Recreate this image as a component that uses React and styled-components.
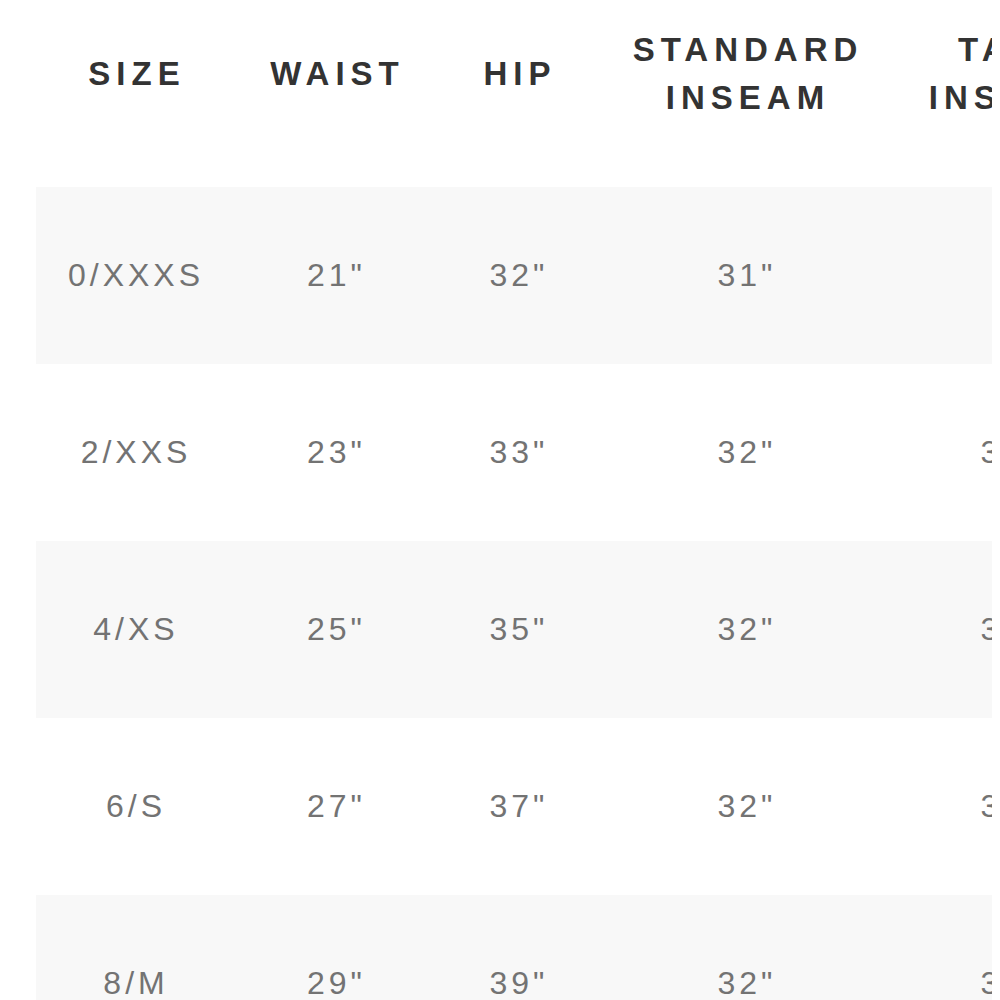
import React from 'react'
import styled, { createGlobalStyle } from 'styled-components'

const GlobalStyle = createGlobalStyle`
  body {
    margin: 0;
    background: #ffffff;
    font-family: "Liberation Sans", Arial, sans-serif;
  }
`

const Page = styled.div`
  width: 1000px;
  height: 1000px;
  overflow: hidden;
  padding-left: 36px;
  box-sizing: border-box;
`
const Frame = styled.div`
  width: 956px;
  overflow: hidden;
`
const Grid = styled.div`
  display: grid;
  grid-template-columns: 196px 205px 160px 296px 230px;
  width: 1087px;
`
const HeadCell = styled.div`
  height: 148px;
  margin-bottom: 39px;
  display: flex;
  align-items: center;
  justify-content: center;
  text-align: center;
  padding-left: 6px;
  box-sizing: border-box;
  color: #333333;
  font-size: 33px;
  font-weight: bold;
  letter-spacing: 6px;
  line-height: 48px;
`
const Cell = styled.div`
  height: 177px;
  display: flex;
  align-items: center;
  justify-content: center;
  padding-left: 4px;
  box-sizing: border-box;
  background: ${props => (props.striped ? '#f8f8f8' : '#ffffff')};
  color: #737373;
  font-size: 32px;
  letter-spacing: 4px;
`

const headers = [['SIZE'], ['WAIST'], ['HIP'], ['STANDARD', 'INSEAM'], ['TALL', 'INSEAM']]

const rows = [
  ['0/XXXS', '21"', '32"', '31"', ''],
  ['2/XXS', '23"', '33"', '32"', '34"'],
  ['4/XS', '25"', '35"', '32"', '34"'],
  ['6/S', '27"', '37"', '32"', '34"'],
  ['8/M', '29"', '39"', '32"', '34"'],
]

const App = () => (
  <Page>
    <GlobalStyle />
    <Frame>
      <Grid>
        {headers.map((lines, i) => (
          <HeadCell key={i}>
            <span>
              {lines.map((l, j) => (
                <React.Fragment key={j}>
                  {j > 0 && <br />}
                  {l}
                </React.Fragment>
              ))}
            </span>
          </HeadCell>
        ))}
        {rows.map((row, r) =>
          row.map((value, c) => (
            <Cell key={`${r}-${c}`} striped={r % 2 === 0}>
              {value}
            </Cell>
          ))
        )}
      </Grid>
    </Frame>
  </Page>
)

export default App
